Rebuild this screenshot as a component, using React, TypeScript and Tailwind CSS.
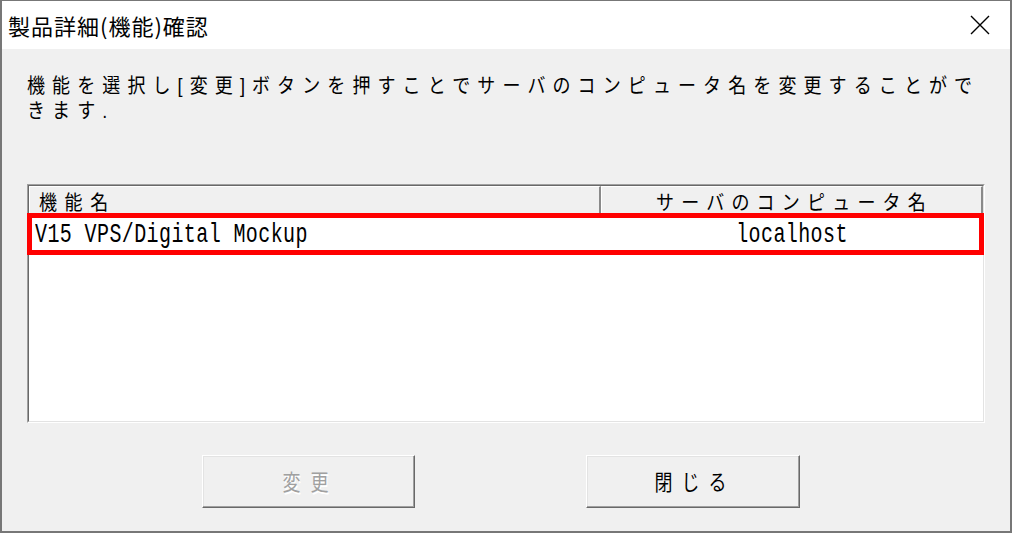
export default function App() {
  return (
    <div className="w-[1013px] h-[533px] bg-white font-['Noto_Sans_CJK_JP',sans-serif] text-black">
      <div className="w-[1012px] h-[533px] flex flex-col border-t border-x-2 border-b-2 border-[#777777]">
        {/* Title bar */}
        <div className="h-[48px] shrink-0 bg-white flex items-center justify-between pl-[6px] pr-[20px]">
          <span className="text-[22px] tracking-[1px] leading-none">製品詳細(機能)確認</span>
          <svg width="20" height="20" viewBox="0 0 20 20">
            <path d="M1 1L19 19M19 1L1 19" stroke="#000" strokeWidth="1.4" />
          </svg>
        </div>
        {/* Body */}
        <div className="flex-1 bg-[#f0f0f0] px-[25px] pt-[27px] flex flex-col">
          <div className="flex flex-col gap-[5px] font-['Liberation_Sans','Noto_Sans_CJK_JP',sans-serif] text-[18px] tracking-[7.1px] whitespace-nowrap">
            <div className="h-[20px] leading-[20px] scale-y-[1.15]">機能を選択し[変更]ボタンを押すことでサーバのコンピュータ名を変更することがで</div>
            <div className="h-[20px] leading-[20px] scale-y-[1.15]">きます.</div>
          </div>
          {/* List box */}
          <div className="relative mt-[63px] w-[958px] h-[239px] border border-t-[#a0a0a0] border-l-[#a0a0a0] border-b-white border-r-white">
            <div className="h-full flex flex-col bg-white border border-t-[#696969] border-l-[#696969] border-b-[#e3e3e3] border-r-[#e3e3e3]">
              <div className="h-[30px] shrink-0 flex">
                <div className="w-[572px] bg-[#f0f0f0] border border-t-white border-l-white border-b-[#a0a0a0] border-r-2 border-r-[#8a8a8a] pl-[9px] pt-[3px]">
                  <span className="inline-block text-[18px] leading-[22px] tracking-[7.6px] scale-y-[1.15]">機能名</span>
                </div>
                <div className="flex-1 bg-[#f0f0f0] border border-t-white border-l-white border-b-[#a0a0a0] border-r-2 border-r-[#8a8a8a] text-center pt-[3px] pl-[6px]">
                  <span className="inline-block text-[18px] leading-[22px] tracking-[7.2px] scale-y-[1.15]">サーバのコンピュータ名</span>
                </div>
              </div>
              <div className="h-[36px] shrink-0 flex items-center">
                <div className="w-[572px] pl-[6px]">
                  <span className="inline-block font-['Liberation_Mono',monospace] text-[20px] leading-[24px] tracking-[0.4px] scale-y-[1.35]">
                    V15 VPS/Digital Mockup
                  </span>
                </div>
                <div className="flex-1 text-center">
                  <span className="inline-block font-['Liberation_Mono',monospace] text-[20px] leading-[24px] tracking-[0.4px] scale-y-[1.35]">
                    localhost
                  </span>
                </div>
              </div>
            </div>
            <div className="absolute left-[-1px] top-[28px] w-[957px] h-[42px] border-[5px] border-[#ff0000]" />
          </div>
          {/* Buttons */}
          <div className="flex pl-[175px] gap-[171px] mt-[32px]">
            <div className="w-[213px] h-[53px] flex items-center justify-center border border-t-white border-l-white border-b-[#696969] border-r-[#696969] shadow-[inset_-1px_-1px_0_#a0a0a0,inset_1px_1px_0_#e3e3e3]">
              <span className="inline-block text-[18px] tracking-[10px] pl-[4px] scale-y-[1.2] text-[#a0a0a0] [text-shadow:1px_1px_0_#ffffff]">変更</span>
            </div>
            <div className="w-[214px] h-[53px] flex items-center justify-center border border-t-white border-l-white border-b-[#696969] border-r-[#696969] shadow-[inset_-1px_-1px_0_#a0a0a0,inset_1px_1px_0_#e3e3e3]">
              <span className="inline-block text-[18px] tracking-[9px] pl-[4px] scale-y-[1.2]">閉じる</span>
            </div>
          </div>
        </div>
      </div>
    </div>
  );
}
